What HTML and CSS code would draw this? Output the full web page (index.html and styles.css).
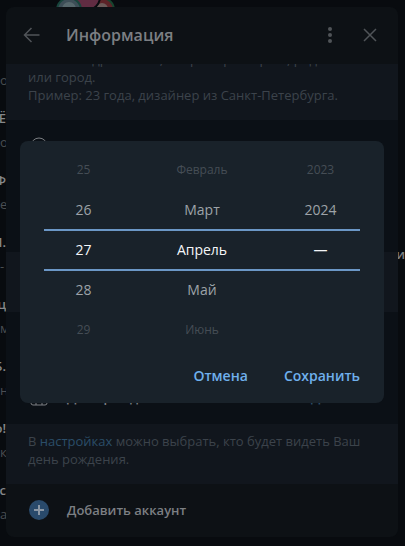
FILE: index.html
```html
<!DOCTYPE html>
<html lang="ru">
<head>
<meta charset="utf-8">
<meta name="viewport" content="width=device-width, initial-scale=1">
<title>Информация</title>
<link rel="stylesheet" href="styles.css">
</head>
<body>
<aside class="backdrop" aria-hidden="true">
  <svg class="stories" width="64" height="24" viewBox="0 0 64 24">
    <circle cx="46" cy="10" r="12" fill="#5b2327" stroke="#17452f" stroke-width="2"/>
    <circle cx="46" cy="9" r="6" fill="#6b5a58"/>
    <circle cx="31" cy="-3" r="13" fill="#602c42" stroke="#080b0f" stroke-width="2"/>
    <circle cx="13" cy="10" r="12" fill="#3d4e57" stroke="#17453c" stroke-width="2"/>
    <circle cx="13" cy="9" r="7" fill="#56676c"/>
  </svg>
  <ul class="chats">
    <li class="chat"><b>&nbsp;</b><span>о</span></li>
    <li class="chat"><b>Ё</b><span>ос</span></li>
    <li class="chat"><b>Ф</b><span>е</span></li>
    <li class="chat"><b>Л.</b><span>-</span></li>
    <li class="chat"><b>ц</b><span>ми</span></li>
    <li class="chat"><b>Б.</b><span>не</span></li>
    <li class="chat"><b>о!</b><span>к</span></li>
    <li class="chat"><b>сс</b><span>а</span></li>
  </ul>
  <b class="peer">и</b>
</aside>

<main class="panel">
  <header class="panel-header">
    <button class="icon-button" type="button" aria-label="Назад">
      <svg width="18" height="18" viewBox="0 0 18 18"><path d="M16.500 9H1.500M8.500 2L1.500 9L8.500 16"/></svg>
    </button>
    <h1>Информация</h1>
    <button class="icon-button" type="button" aria-label="Меню">
      <svg width="18" height="18" viewBox="0 0 18 18"><g class="dots"><circle cx="9" cy="3" r="2"/><circle cx="9" cy="9" r="2"/><circle cx="9" cy="15" r="2"/></g></svg>
    </button>
    <button class="icon-button" type="button" aria-label="Закрыть">
      <svg width="18" height="18" viewBox="0 0 18 18"><path d="M3 3L15 15M15 3L3 15"/></svg>
    </button>
  </header>
  <section class="note note-bio">
    <p>Любые подробности, например: возраст, род занятий или город.<br>Пример: 23 года, дизайнер из Санкт-Петербурга.</p>
  </section>
  <section class="rows">
    <div class="row">
      <svg class="row-icon" width="20" height="20" viewBox="0 0 20 20"><circle cx="10" cy="10" r="8"/><circle cx="10" cy="10" r="4"/></svg>
    </div>
  </section>
  <section class="note note-middle"></section>
  <section class="rows rows-birthday">
    <div class="row">
      <svg class="row-icon" width="20" height="20" viewBox="0 0 20 20"><rect x="2" y="3" width="16" height="15" rx="2"/><path d="M2 8H18M7 8V18M13 8V18"/></svg>
      <span>День рождения</span>
      <a class="row-value" href="#birthday">Добавить</a>
    </div>
  </section>
  <section class="note note-privacy">
    <p>В <a href="#settings">настройках</a> можно выбрать, кто будет видеть Ваш день рождения.</p>
  </section>
  <button class="row add-account" type="button">
    <svg width="20" height="20" viewBox="0 0 20 20"><circle cx="10" cy="10" r="10" fill="#294a6b"/><path d="M10 5V15M5 10H15" stroke="#8a97a5" stroke-width="2"/></svg>
    <span>Добавить аккаунт</span>
  </button>
</main>

<div class="overlay">
  <div class="dialog" role="dialog" aria-modal="true" aria-label="Дата">
    <div class="picker">
      <ul class="wheel">
        <li class="far">25</li><li>26</li><li class="selected">27</li><li>28</li><li class="far">29</li>
      </ul>
      <ul class="wheel">
        <li class="far">Февраль</li><li>Март</li><li class="selected">Апрель</li><li>Май</li><li class="far">Июнь</li>
      </ul>
      <ul class="wheel">
        <li class="far">2023</li><li>2024</li><li class="selected">—</li>
      </ul>
    </div>
    <div class="actions">
      <button type="button">Отмена</button>
      <button type="button">Сохранить</button>
    </div>
  </div>
</div>
</body>
</html>
```

FILE: styles.css
```css
*,
*::after {
  box-sizing: border-box;
}

body {
  margin: 0;
  min-height: 100vh;
  padding: 7px 7px 9px 6px;
  display: flex;
  overflow: hidden;
  background: #080b0f;
  color: #7c7f83;
  font: 13px/18px "Open Sans", "Noto Sans", sans-serif;
}

h1, p, ul {
  margin: 0;
  padding: 0;
}

ul {
  list-style: none;
}

a {
  text-decoration: none;
}

button {
  margin: 0;
  padding: 0;
  border: 0;
  background: none;
  color: inherit;
  font: inherit;
  cursor: pointer;
}

/* Main window behind the panel */
.backdrop {
  position: absolute;
  inset: 0;
  overflow: hidden;
}

.stories {
  position: absolute;
  top: 0;
  left: 56px;
}

.chats {
  width: 6px;
  padding-top: 37px;
}

.chat {
  height: 62px;
  padding-top: 7px;
  display: flex;
  flex-direction: column;
  line-height: 24px;
  color: #4a4e52;
}

.chat b {
  align-self: flex-end;
  font-weight: 600;
  color: #85878a;
}

.peer {
  position: absolute;
  top: 245px;
  right: 0;
  font-weight: 600;
}

/* Information panel */
.panel {
  position: relative;
  flex: 1;
  display: flex;
  flex-direction: column;
  overflow: hidden;
  border-radius: 8px;
  background: #0d1115;
}

.panel-header {
  height: 57px;
  padding: 0 19px 2px 17px;
  display: flex;
  align-items: center;
}

.panel-header h1 {
  flex: 1;
  padding-left: 25px;
  font-size: 16px;
  font-weight: 600;
  line-height: 24px;
}

.icon-button {
  height: 18px;
  color: #505458;
}

.icon-button + .icon-button {
  margin-left: 22px;
}

.icon-button svg {
  display: block;
  fill: none;
  stroke: currentColor;
  stroke-width: 1.5;
}

.icon-button .dots {
  fill: currentColor;
  stroke: none;
}

.note {
  padding: 8px 22px;
  background: #11161d;
  color: #3c434b;
}

.note-bio {
  height: 56px;
  padding: 0 22px 16px;
  display: flex;
  flex-direction: column;
  justify-content: flex-end;
  overflow: hidden;
}

.note-privacy {
  height: 60px;
}

.note-privacy a {
  color: #2b4e69;
}

.note-middle {
  height: 60px;
}

.rows {
  flex: 1;
  background: #0b1016;
}

.rows-birthday {
  flex: none;
  height: 112px;
  display: flex;
  flex-direction: column;
  justify-content: flex-end;
}

.row {
  height: 53px;
  padding: 0 23px 2px;
  display: flex;
  align-items: center;
  gap: 18px;
  font-weight: 600;
}

.row-icon {
  fill: none;
  stroke: #7c7f83;
  stroke-width: 1;
}

.row-value {
  margin-left: auto;
  color: #2b4e69;
}

.add-account {
  text-align: left;
}

/* Date dialog */
.overlay {
  position: fixed;
  inset: 0;
  padding: 0 21px 2px 20px;
  display: flex;
  align-items: center;
  justify-content: center;
}

.dialog {
  width: 100%;
  max-width: 420px;
  padding: 9px 24px;
  border-radius: 8px;
  background: #19222a;
}

.picker {
  position: relative;
  display: grid;
  grid-template-columns: 1fr 2fr 1fr;
}

/* Selection frame across the three wheels */
.picker::after {
  content: "";
  position: absolute;
  top: 79px;
  left: 0;
  right: 0;
  height: 42px;
  border: solid #6b97c6;
  border-width: 2px 0;
  pointer-events: none;
}

.wheel {
  text-align: center;
  font-size: 14px;
  line-height: 40px;
  color: #9da3a8;
}

.wheel li {
  height: 40px;
}

.wheel .selected {
  color: #f4f6f8;
}

.wheel .far {
  font-size: 12px;
  color: #454d55;
}

.actions {
  height: 44px;
  padding-top: 8px;
  display: flex;
  justify-content: flex-end;
  gap: 36px;
  color: #6fb0ec;
  font-size: 14px;
  font-weight: 600;
}
```
